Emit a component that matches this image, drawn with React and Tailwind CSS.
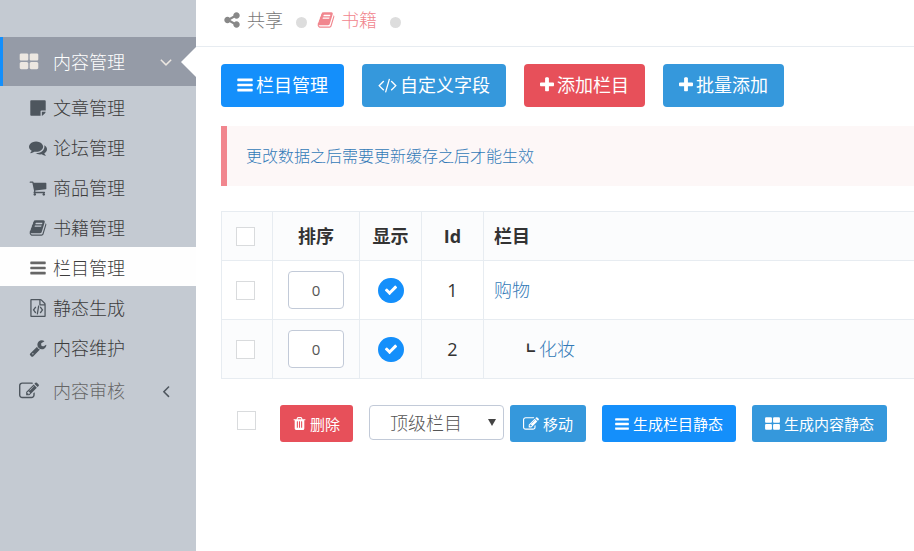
import { useState } from 'react';
import clsx from 'clsx';

const icons = {
  thLarge:
    'M832 1024v384q0 52-38 90t-90 38h-512q-52 0-90-38t-38-90v-384q0-52 38-90t90-38h512q52 0 90 38t38 90zm0-768v384q0 52-38 90t-90 38h-512q-52 0-90-38t-38-90v-384q0-52 38-90t90-38h512q52 0 90 38t38 90zm896 768v384q0 52-38 90t-90 38h-512q-52 0-90-38t-38-90v-384q0-52 38-90t90-38h512q52 0 90 38t38 90zm0-768v384q0 52-38 90t-90 38h-512q-52 0-90-38t-38-90v-384q0-52 38-90t90-38h512q52 0 90 38t38 90z',
  note: 'M1152 1248v416h-928q-40 0-68-28t-28-68v-1344q0-40 28-68t68-28h1344q40 0 68 28t28 68v928h-416q-40 0-68 28t-28 68zm128 32h381q-15 82-65 132l-184 184q-50 50-132 65z',
  comments:
    'M1408 768q0 139-94 257t-256.500 186.500-353.500 68.500q-86 0-176-16-124 88-278 128-36 9-86 16h-3q-11 0-20.500-8t-11.500-21q-1-3-1-6.500t.5-6.500 2-6l2.500-5 3.500-5.500 4-5 4.500-5 4-4.500q5-6 23-25t26-29.500 22.500-29 25-38.500 20.500-44q-124-72-195-177t-71-224q0-139 94-257t256.500-186.500 353.500-68.500 353.500 68.500 256.500 186.500 94 257zm384 256q0 120-71 224.500t-195 176.500q10 24 20.500 44t25 38.500 22.500 29 26 29.500 23 25q1 1 4 4.500t4.500 5 4 5 3.500 5.500l2.500 5 2 6 .5 6.500-1 6.500q-3 14-13 22t-22 7q-50-7-86-16-154-40-278-128-90 16-176 16-271 0-472-132 58 4 88 4 161 0 309-45t264-129q125-92 192-212t67-254q0-77-23-152 129 71 204 178t75 230z',
  cart: 'M704 1536q0 52-38 90t-90 38-90-38-38-90 38-90 90-38 90 38 38 90zm896 0q0 52-38 90t-90 38-90-38-38-90 38-90 90-38 90 38 38 90zm128-1088v512q0 24-16.500 42.500t-40.500 21.500l-1044 122q13 60 13 70 0 16-24 64h920q26 0 45 19t19 45-19 45-45 19h-1024q-26 0-45-19t-19-45q0-11 8-31.500t16-36 21.500-40 15.500-29.500l-177-823h-204q-26 0-45-19t-19-45 19-45 45-19h256q16 0 28.500 6.500t19.500 15.500 13 24.500 8 26 5.500 29.500 4.500 26h1201q26 0 45 19t19 45z',
  book: 'M1703 478q40 57 18 129l-275 906q-19 64-76.500 107.500t-122.500 43.500h-923q-77 0-148.500-53.500t-99.500-131.500q-24-67-2-127 0-4 3-27t4-37q1-8-3-21.500t-3-19.500q2-11 8-21t16.500-23.500 16.500-23.500q23-38 45-91.500t30-91.500q3-10 .5-30t-.5-28q3-11 17-28t17-23q21-36 42-92t25-90q1-9-2.500-32t.5-28q4-13 22-30.500t22-22.500q19-26 42.500-84.500t27.500-96.500q1-8-3-25.500t-2-26.500q2-8 9-18t18-23 17-21q8-12 16.500-30.500t15-35 16-36 19.500-32 26.500-23.500 36-11.500 47.500 5.500l-1 3q38-9 51-9h761q74 0 114 56t18 130l-274 906q-36 119-71.500 153.500t-128.500 34.500h-869q-27 0-38 15-11 16-1 43 24 70 144 70h923q29 0 56-15.500t35-41.500l300-987q7-22 5-57 38 15 59 43zm-1064 2q-4 13 2 22.500t20 9.500h608q13 0 25.500-9.500t16.500-22.500l21-64q4-13-2-22.500t-20-9.500h-608q-13 0-25.500 9.500t-16.500 22.500zm-83 256q-4 13 2 22.500t20 9.500h608q13 0 25.500-9.500t16.500-22.500l21-64q4-13-2-22.500t-20-9.500h-608q-13 0-25.500 9.500t-16.500 22.500z',
  bars: 'M1664 1344v128q0 26-19 45t-45 19h-1408q-26 0-45-19t-19-45v-128q0-26 19-45t45-19h1408q26 0 45 19t19 45zm0-512v128q0 26-19 45t-45 19h-1408q-26 0-45-19t-19-45v-128q0-26 19-45t45-19h1408q26 0 45 19t19 45zm0-512v128q0 26-19 45t-45 19h-1408q-26 0-45-19t-19-45v-128q0-26 19-45t45-19h1408q26 0 45 19t19 45z',
  fileCode:
    'M1596 380q28 28 48 76t20 88v1152q0 40-28 68t-68 28h-1344q-40 0-68-28t-28-68v-1600q0-40 28-68t68-28h896q40 0 88 20t76 48zm-444-244v376h376q-10-29-22-41l-313-313q-12-12-41-22zm384 1528v-1024h-416q-40 0-68-28t-28-68v-416h-768v1536h1280zm-928-896q8-11 21-12.500t24 6.500l51 38q11 8 12.500 21t-6.500 24l-182 243 182 243q8 11 6.500 24t-12.500 21l-51 38q-11 8-24 6.500t-21-12.500l-226-301q-14-19 0-38zm802 301q14 19 0 38l-226 301q-8 11-21 12.500t-24-6.500l-51-38q-11-8-12.500-21t6.500-24l182-243-182-243q-8-11-6.500-24t12.500-21l51-38q11-8 24-6.500t21 12.500zm-620 461q-13-2-20.500-13t-5.500-24l138-831q2-13 13-20.500t24-5.500l63 10q13 2 20.500 13t5.500 24l-138 831q-2 13-13 20.500t-24 5.500z',
  wrench:
    'M448 1472q0-26-19-45t-45-19-45 19-19 45 19 45 45 19 45-19 19-45zm644-420l-682 682q-37 37-90 37-52 0-91-37l-106-108q-38-36-38-90 0-53 38-91l681-681q39 98 114.500 173.500t173.500 114.500zm634-435q0 39-23 106-47 134-164.500 217.500t-258.500 83.500q-185 0-316.500-131.500t-131.500-316.500 131.500-316.500 316.500-131.500q58 0 121.500 16.500t107.500 46.500q16 11 16 28t-16 28l-293 169v224l193 107q5-3 79-48.500t135.500-81 70.500-35.500q15 0 23.500 10t8.500 25z',
  edit: 'M888 1184l116-116-152-152-116 116v56h96v96h56zm440-720q-16-16-33 1l-350 350q-17 17-1 33t33-1l350-350q17-17 1-33zm80 594v190q0 119-84.500 203.500t-203.500 84.500h-832q-119 0-203.500-84.500t-84.500-203.500v-832q0-119 84.500-203.500t203.500-84.500h832q63 0 117 25 15 7 18 23 3 17-9 29l-49 49q-14 14-32 8-23-6-45-6h-832q-66 0-113 47t-47 113v832q0 66 47 113t113 47h832q66 0 113-47t47-113v-126q0-13 9-22l64-64q15-15 35-7t20 29zm-96-738l288 288-672 672h-288v-288zm444 132l-92 92-288-288 92-92q28-28 68-28t68 28l152 152q28 28 28 68t-28 68z',
  angleDown:
    'M1395 736q0 13-10 23l-466 466q-10 10-23 10t-23-10l-466-466q-10-10-10-23t10-23l50-50q10-10 23-10t23 10l393 393 393-393q10-10 23-10t23 10l50 50q10 10 10 23z',
  angleLeft:
    'M1203 544q0 13-10 23l-393 393 393 393q10 10 10 23t-10 23l-50 50q-10 10-23 10t-23-10l-466-466q-10-10-10-23t10-23l466-466q10-10 23-10t23 10l50 50q10 10 10 23z',
  share:
    'M1344 1024q133 0 226.500 93.500t93.500 226.500-93.500 226.500-226.500 93.500-226.500-93.500-93.500-226.500q0-12 2-34l-360-180q-92 86-218 86-133 0-226.500-93.500t-93.500-226.500 93.500-226.500 226.500-93.500q126 0 218 86l360-180q-2-22-2-34 0-133 93.500-226.500t226.500-93.500 226.500 93.500 93.500 226.500-93.500 226.500-226.500 93.500q-126 0-218-86l-360 180q2 22 2 34t-2 34l360 180q92-86 218-86z',
  code: 'M681 1399l-50 50q-10 10-23 10t-23-10l-466-466q-10-10-10-23t10-23l466-466q10-10 23-10t23 10l50 50q10 10 10 23t-10 23l-393 393 393 393q10 10 10 23t-10 23zm591-1067l-373 1291q-4 13-15.500 19.500t-23.500 2.500l-62-17q-13-4-19.500-15.500t-2.500-24.500l373-1291q4-13 15.500-19.500t23.500-2.500l62 17q13 4 19.500 15.500t2.500 24.500zm657 651l-466 466q-10 10-23 10t-23-10l-50-50q-10-10-10-23t10-23l393-393-393-393q-10-10-10-23t10-23l50-50q10-10 23-10t23 10l466 466q10 10 10 23t-10 23z',
  plus: 'M1600 736v192q0 40-28 68t-68 28h-416v416q0 40-28 68t-68 28h-192q-40 0-68-28t-28-68v-416h-416q-40 0-68-28t-28-68v-192q0-40 28-68t68-28h416v-416q0-40 28-68t68-28h192q40 0 68 28t28 68v416h416q40 0 68 28t28 68z',
  check:
    'M1671 566q0 40-28 68l-724 724-136 136q-28 28-68 28t-68-28l-136-136-362-362q-28-28-28-68t28-68l136-136q28-28 68-28t68 28l294 295 656-657q28-28 68-28t68 28l136 136q28 28 28 68z',
  trash:
    'M704 1376v-704q0-14-9-23t-23-9h-64q-14 0-23 9t-9 23v704q0 14 9 23t23 9h64q14 0 23-9t9-23zm256 0v-704q0-14-9-23t-23-9h-64q-14 0-23 9t-9 23v704q0 14 9 23t23 9h64q14 0 23-9t9-23zm256 0v-704q0-14-9-23t-23-9h-64q-14 0-23 9t-9 23v704q0 14 9 23t23 9h64q14 0 23-9t9-23zm-544-992h448l-48-117q-7-9-17-11h-317q-10 2-17 11zm928 32v64q0 14-9 23t-23 9h-96v948q0 83-47 143.500t-113 60.500h-832q-66 0-113-58.500t-47-141.500v-952h-96q-14 0-23-9t-9-23v-64q0-14 9-23t23-9h309l70-167q15-37 54-63t79-26h320q40 0 79 26t54 63l70 167h309q14 0 23 9t9 23z'
};

// glyphs that are narrower or wider than the 1792 em square
const viewBoxes = {
  bars: '128 0 1536 1792',
  plus: '192 0 1408 1792',
  trash: '192 0 1408 1792',
  thLarge: '64 0 1664 1792',
  code: '109 0 1830 1792'
};

const Icon = ({ name, className }) => (
  <svg
    viewBox={viewBoxes[name] || '0 0 1792 1792'}
    fill="currentColor"
    className={clsx('shrink-0', className)}
    aria-hidden="true"
  >
    <path d={icons[name]} />
  </svg>
);

const menuItems = [
  { icon: 'note', label: '文章管理' },
  { icon: 'comments', label: '论坛管理' },
  { icon: 'cart', label: '商品管理' },
  { icon: 'book', label: '书籍管理' },
  { icon: 'bars', label: '栏目管理', active: true },
  { icon: 'fileCode', label: '静态生成' },
  { icon: 'wrench', label: '内容维护' }
];

const initialRows = [
  { id: 1, name: '购物', order: '0', visible: true },
  { id: 2, name: '化妆', order: '0', visible: true, child: true }
];

const Sidebar = () => (
  <nav className="w-[196px] shrink-0 bg-[#c4cad2] pt-[37px] font-light text-[#3c3c3c]">
    <a
      href="#content"
      className="relative flex h-[49px] items-center border-l-3 border-[#148ffb] bg-[#959ba7] pl-4 text-white"
    >
      <Icon name="thLarge" className="size-5 text-[#ece7e1]" />
      <span className="ml-[14px]">内容管理</span>
      <Icon name="angleDown" className="ml-[31px] size-5 text-[#ece7e1]" />
      <svg viewBox="0 0 15 30" className="absolute right-0 top-[10px] h-[30px] w-[15px]" fill="#fff" aria-hidden="true">
        <path d="M15 0v30L0 15z" />
      </svg>
    </a>

    <ul className="pt-px">
      {menuItems.map((item) => (
        <li key={item.label} className="mb-px">
          <a
            href={`#${item.icon}`}
            className={clsx('flex h-[39px] items-center gap-[6px] pl-[29px] pt-[2px]', item.active && 'bg-[#fefefe]')}
          >
            <Icon name={item.icon} className={clsx('size-[18px]', item.active ? 'text-[#666]' : 'text-[#4e565e]')} />
            <span>{item.label}</span>
          </a>
        </li>
      ))}
    </ul>

    <a href="#review" className="flex h-12 items-center pl-[19px] text-[#666]">
      <Icon name="edit" className="size-5 text-[#4e565e]" />
      <span className="ml-[14px]">内容审核</span>
      <Icon name="angleLeft" className="ml-[31px] size-5 text-[#4e565e]" />
    </a>
  </nav>
);

const Checkbox = ({ label, ...props }) => (
  <input
    type="checkbox"
    aria-label={label}
    className="block size-[19px] shrink-0 appearance-none border border-[#d9dbdd] bg-white checked:bg-[#148ffb]"
    {...props}
  />
);

const ToolButton = ({ icon, iconSize, color, children }) => (
  <button
    type="button"
    className={clsx('flex h-[43px] items-center gap-[3px] rounded px-4 pb-px font-normal text-white', color)}
  >
    <Icon name={icon} className={iconSize} />
    {children}
  </button>
);

const SmallButton = ({ icon, iconSize, color, children }) => (
  <button
    type="button"
    className={clsx('flex h-[37px] items-center gap-1 rounded-[3px] px-[13px] text-[15px] font-normal text-white', color)}
  >
    <Icon name={icon} className={iconSize} />
    {children}
  </button>
);

const App = () => {
  const [rows, setRows] = useState(initialRows);
  const [selected, setSelected] = useState([]);
  const allSelected = selected.length === rows.length;

  const updateRow = (id, changes) =>
    setRows((current) => current.map((row) => (row.id === id ? { ...row, ...changes } : row)));

  const toggleAll = () => setSelected(allSelected ? [] : rows.map((row) => row.id));

  const toggleRow = (id) =>
    setSelected((current) => (current.includes(id) ? current.filter((entry) => entry !== id) : [...current, id]));

  return (
    <div className="flex min-h-screen bg-white font-['Open_Sans','Noto_Sans_CJK_SC',sans-serif] text-[18px] leading-6 text-[#333]">
      <Sidebar />

      <main className="min-w-0 flex-1 font-light">
        <div className="flex h-[47px] items-center border-b border-[#e7ecf1] pl-[27px] pb-[6px]">
          <a href="#share" className="flex items-center gap-[6px] text-[#777]">
            <Icon name="share" className="size-[18px] text-[#888]" />
            共享
          </a>
          <span className="ml-[13px] mt-1 size-[11px] rounded-full bg-[#ddd]" />
          <a href="#book" className="ml-[10px] flex items-center gap-[6px] text-[#f1868e]">
            <Icon name="book" className="size-[18px]" />
            书籍
          </a>
          <span className="ml-[13px] mt-1 size-[11px] rounded-full bg-[#ddd]" />
        </div>

        <div className="pl-[25px] pt-[17px]">
          <div className="flex gap-[18px] whitespace-nowrap">
            <ToolButton icon="bars" iconSize="h-[18px] w-4" color="bg-[#148ffb]">栏目管理</ToolButton>
            <ToolButton icon="code" iconSize="h-[18px] w-[19px]" color="bg-[#3598dc]">自定义字段</ToolButton>
            <ToolButton icon="plus" iconSize="h-[18px] w-[14px]" color="bg-[#e7505a]">添加栏目</ToolButton>
            <ToolButton icon="plus" iconSize="h-[18px] w-[14px]" color="bg-[#3598dc]">批量添加</ToolButton>
          </div>

          <div className="mt-[19px] border-l-6 border-[#f1868e] bg-[#fdf7f7] px-[19px] py-[18px] text-base text-[#337ab7]">
            更改数据之后需要更新缓存之后才能生效
          </div>

          <table className="mt-[25px] w-full table-fixed border-collapse border-y border-l border-[#e7ecf1] text-center [&_td]:border-r [&_td]:border-[#e7ecf1] [&_td:last-child]:border-r-0 [&_th]:border-r [&_th]:border-[#e7ecf1] [&_th:last-child]:border-r-0">
            <colgroup>
              <col className="w-[51px]" />
              <col className="w-[87px]" />
              <col className="w-[62px]" />
              <col className="w-[62px]" />
              <col />
            </colgroup>
            <thead>
              <tr className="h-[49px] border-b border-[#e7ecf1] bg-[#fbfcfd] font-bold">
                <th className="pl-[14px]">
                  <Checkbox label="全选" checked={allSelected} onChange={toggleAll} />
                </th>
                <th>排序</th>
                <th>显示</th>
                <th>Id</th>
                <th className="pl-[10px] text-left">栏目</th>
              </tr>
            </thead>
            <tbody>
              {rows.map((row) => (
                <tr key={row.id} className="h-[59px] border-b border-[#e7ecf1] even:bg-[#fbfcfd]">
                  <td className="pl-[14px]">
                    <Checkbox
                      label={row.name}
                      checked={selected.includes(row.id)}
                      onChange={() => toggleRow(row.id)}
                    />
                  </td>
                  <td>
                    <input
                      type="text"
                      aria-label="排序"
                      value={row.order}
                      onChange={(event) => updateRow(row.id, { order: event.target.value })}
                      className="mx-auto block h-[38px] w-14 rounded border border-[#c2cad8] bg-white text-center text-[15px] font-normal text-[#555]"
                    />
                  </td>
                  <td>
                    <button
                      type="button"
                      aria-label="显示"
                      aria-pressed={row.visible}
                      onClick={() => updateRow(row.id, { visible: !row.visible })}
                      className={clsx(
                        'mx-auto flex h-[25px] w-[26px] items-center justify-center rounded-full text-white',
                        row.visible ? 'bg-[#148ffb]' : 'bg-[#c2cad8]'
                      )}
                    >
                      <Icon name="check" className="size-[14px]" />
                    </button>
                  </td>
                  <td className="font-normal">{row.id}</td>
                  <td className={clsx('text-left', row.child ? 'pl-[37px]' : 'pl-[10px]')}>
                    {row.child ? <span className="mr-1 text-sm font-bold">┗</span> : null}
                    <a href={`#row-${row.id}`} className="text-[#337ab7]">{row.name}</a>
                  </td>
                </tr>
              ))}
            </tbody>
          </table>

          <div className="mt-[26px] flex items-start whitespace-nowrap pl-4">
            <div className="mt-[6px]">
              <Checkbox label="全选" checked={allSelected} onChange={toggleAll} />
            </div>
            <div className="ml-6 flex items-start gap-4">
              <SmallButton icon="trash" iconSize="h-[15px] w-[13px]" color="bg-[#e7505a]">删除</SmallButton>
              <div className="flex items-start gap-[6px]">
                <div className="relative">
                  <select
                    aria-label="顶级栏目"
                    className="h-[35px] w-[135px] appearance-none rounded border border-[#c2cad8] bg-white pl-5 text-[#555]"
                  >
                    <option>顶级栏目</option>
                    <option>购物</option>
                  </select>
                  <svg viewBox="0 0 8 7" className="pointer-events-none absolute right-2 top-[14px] h-[7px] w-2" fill="#444" aria-hidden="true">
                    <path d="M0 0h8L4 7z" />
                  </svg>
                </div>
                <SmallButton icon="edit" iconSize="size-4" color="bg-[#3598dc]">移动</SmallButton>
              </div>
              <SmallButton icon="bars" iconSize="h-4 w-[14px]" color="bg-[#148ffb]">生成栏目静态</SmallButton>
              <SmallButton icon="thLarge" iconSize="h-4 w-[15px]" color="bg-[#3598dc]">生成内容静态</SmallButton>
            </div>
          </div>
        </div>
      </main>
    </div>
  );
};

export default App;
